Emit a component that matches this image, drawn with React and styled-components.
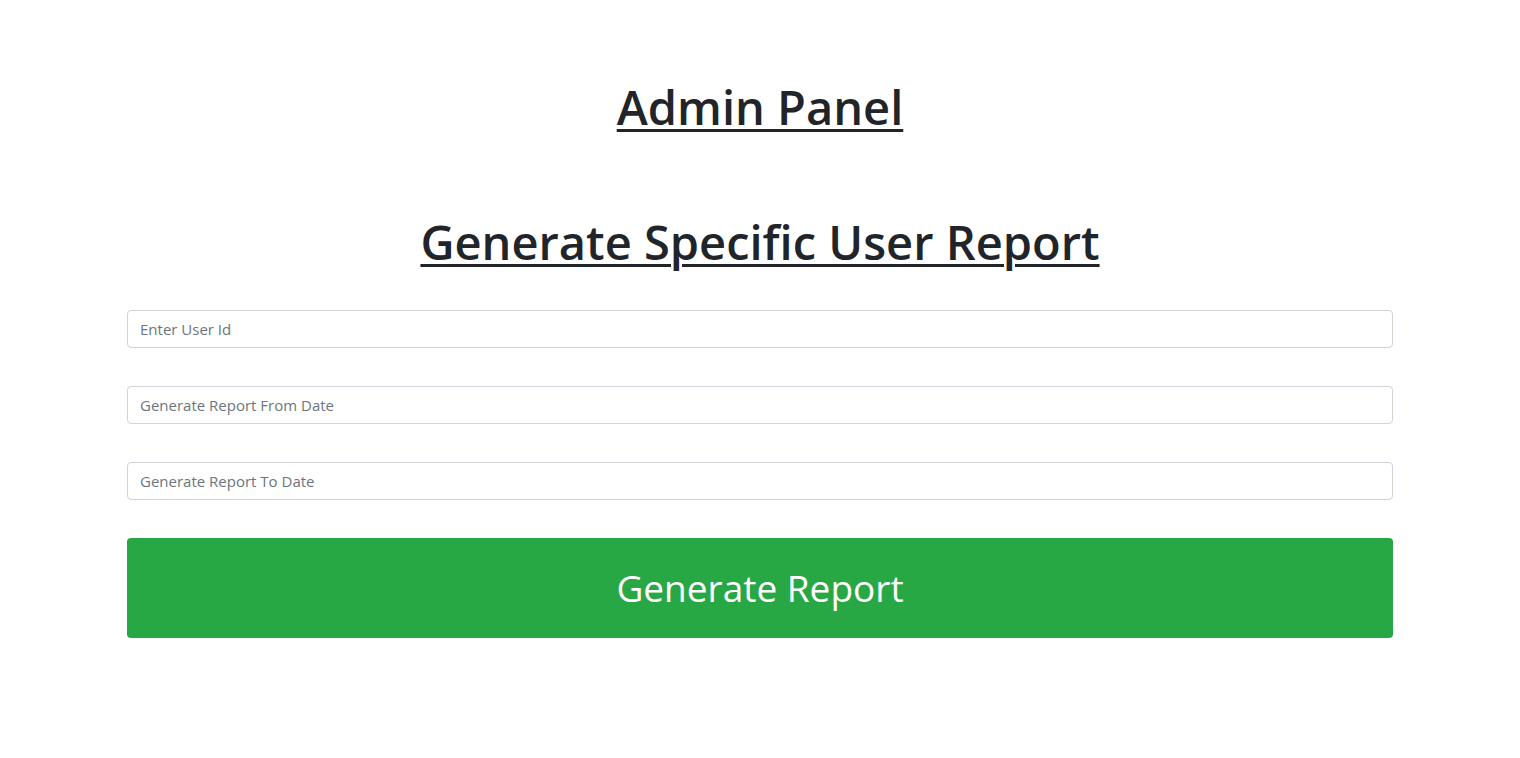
import React from "react";
import styled, { createGlobalStyle } from "styled-components";

const Global = createGlobalStyle`
  html, body { margin: 0; padding: 0; background: #fff; }
  body { font-family: "Open Sans", "Noto Sans", sans-serif; color: #212529; }
  * { box-sizing: border-box; }
`;

const Page = styled.main`
  width: 1266px;
  margin: 0 auto;
  padding-top: 79px;
  display: flex;
  flex-direction: column;
`;

const Title = styled.h1`
  margin: 0 0 ${(p) => p.$gap}px;
  text-align: center;
  font-size: 47px;
  font-weight: 600;
  line-height: 1.2;
  text-decoration: underline;
  text-decoration-thickness: 3px;
  text-underline-offset: 4px;
  color: #212529;
`;

const Form = styled.form`
  display: flex;
  flex-direction: column;
  gap: 38px;
`;

const Input = styled.input`
  display: block;
  width: 100%;
  height: 38px;
  padding: 6px 12px;
  font-family: "Open Sans", "Noto Sans", sans-serif;
  font-size: 15px;
  color: #495057;
  background: #fff;
  border: 1px solid #ced4da;
  border-radius: 4px;
  outline: none;
  &::placeholder { color: #6c757d; opacity: 1; }
`;

const Button = styled.button`
  height: 100px;
  width: 100%;
  border: none;
  border-radius: 4px;
  background: #28a745;
  color: #fff;
  font-family: "Open Sans", "Noto Sans", sans-serif;
  font-size: 37px;
  font-weight: 400;
  cursor: pointer;
`;

export default function App() {
  return (
    <>
      <Global />
      <Page>
        <Title $gap={79}>Admin Panel</Title>
        <Title $gap={39}>Generate Specific User Report</Title>
        <Form onSubmit={(e) => e.preventDefault()}>
          <Input type="text" placeholder="Enter User Id" />
          <Input type="text" placeholder="Generate Report From Date" />
          <Input type="text" placeholder="Generate Report To Date" />
          <Button type="submit">Generate Report</Button>
        </Form>
      </Page>
    </>
  );
}
